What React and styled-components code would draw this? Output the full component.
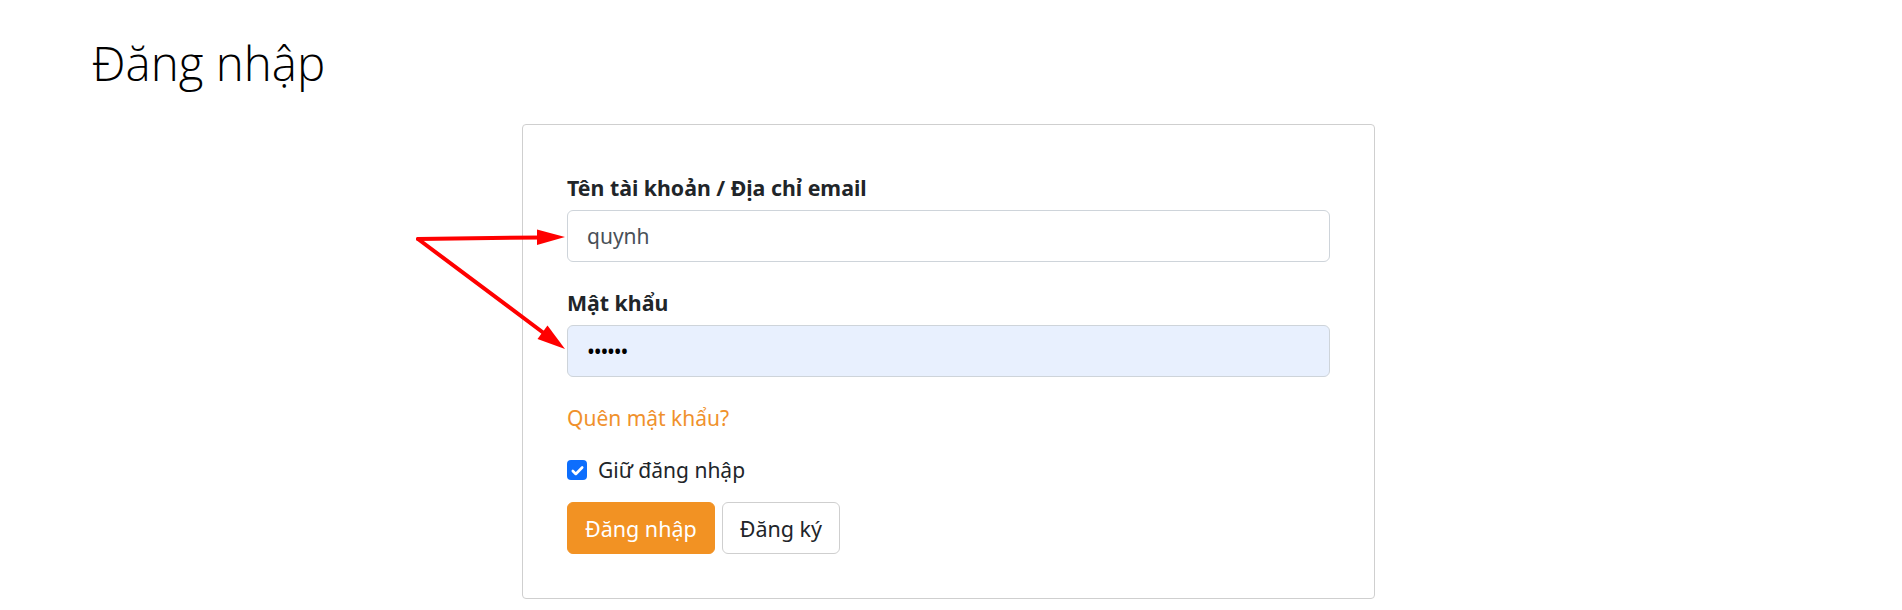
import React from "react";
import styled, { createGlobalStyle } from "styled-components";

const GlobalStyle = createGlobalStyle`
  body {
    margin: 0;
    background: #fff;
    font-family: "Noto Sans", "Open Sans", sans-serif;
    color: #212529;
  }
`;

const App = () => {
  return (
    <Page>
      <GlobalStyle />
      <Title>Đăng nhập</Title>
      <CardRow>
        <Card>
          <Field>
            <Label>Tên tài khoản / Địa chỉ email</Label>
            <Input type="text" defaultValue="quynh" />
          </Field>
          <Field>
            <Label>Mật khẩu</Label>
            <Input type="password" defaultValue="123456" autofilled />
          </Field>
          <ForgotLink href="#">Quên mật khẩu?</ForgotLink>
          <CheckRow>
            <CheckBox>
              <svg width="15" height="15" viewBox="0 0 16 16">
                <path
                  d="M3 8.5l3.2 3.2L13 4.8"
                  fill="none"
                  stroke="#fff"
                  strokeWidth="2.8"
                  strokeLinecap="round"
                  strokeLinejoin="round"
                />
              </svg>
            </CheckBox>
            Giữ đăng nhập
          </CheckRow>
          <Actions>
            <Button primary>Đăng nhập</Button>
            <Button>Đăng ký</Button>
          </Actions>
        </Card>
      </CardRow>
      <Arrows width="1902" height="610" viewBox="0 0 1902 610">
        <line x1="418" y1="239" x2="542" y2="237.4" stroke="#f00" strokeWidth="4" strokeLinecap="round" />
        <polygon points="565,237 537,229.5 537,245" fill="#f00" />
        <line x1="418" y1="239" x2="545" y2="334" stroke="#f00" strokeWidth="4" strokeLinecap="round" />
        <polygon points="565,349 537.5,339 547.5,325.6" fill="#f00" />
      </Arrows>
    </Page>
  );
};

const Page = styled.div`
  position: relative;
  width: 1902px;
  height: 610px;
  overflow: hidden;
`;

const Title = styled.h1`
  margin: 0;
  padding: 34px 0 0 92px;
  font-family: "Open Sans", "Noto Sans", sans-serif;
  font-weight: 300;
  font-size: 47.5px;
  line-height: 1.2;
  color: #000;
`;

const CardRow = styled.div`
  display: flex;
  justify-content: center;
  padding: 33px 5px 0 0;
`;

const Card = styled.div`
  width: 853px;
  box-sizing: border-box;
  border: 1px solid #cfcfcf;
  border-radius: 4px;
  padding: 48px 44px 44px;
  display: flex;
  flex-direction: column;
`;

const Field = styled.div`
  display: flex;
  flex-direction: column;
  gap: 7px;
  margin-bottom: 26px;
`;

const Label = styled.label`
  font-size: 21.3px;
  font-weight: 700;
  line-height: 30px;
  color: #212529;
`;

const Input = styled.input`
  box-sizing: border-box;
  height: 52px;
  width: 100%;
  padding: 0 19px;
  border: 1px solid #ced4da;
  border-radius: 6px;
  font-family: "Noto Sans", "Open Sans", sans-serif;
  font-size: 21px;
  color: ${(p) => (p.autofilled ? "#000" : "#495057")};
  background: ${(p) => (p.autofilled ? "#e8f0fe" : "#fff")};
  letter-spacing: ${(p) => (p.type === "password" ? "-1.2px" : "0")};
  outline: none;
`;

const ForgotLink = styled.a`
  align-self: flex-start;
  font-size: 21px;
  line-height: 30px;
  color: #f0912c;
  text-decoration: none;
  margin-bottom: 22px;
`;

const CheckRow = styled.label`
  display: flex;
  align-items: center;
  gap: 11px;
  font-size: 21px;
  line-height: 30px;
  color: #212529;
  margin-bottom: 17px;
`;

const CheckBox = styled.span`
  width: 20px;
  height: 20px;
  box-sizing: border-box;
  border-radius: 4px;
  background: #0d6efd;
  display: flex;
  align-items: center;
  justify-content: center;
`;

const Actions = styled.div`
  display: flex;
  gap: 7px;
`;

const Button = styled.button`
  height: 52px;
  padding: 0 17px;
  border-radius: 6px;
  font-family: "Noto Sans", "Open Sans", sans-serif;
  font-size: 21.5px;
  border: 1px solid ${(p) => (p.primary ? "#f29223" : "#cfcfcf")};
  background: ${(p) => (p.primary ? "#f29223" : "#fff")};
  color: ${(p) => (p.primary ? "#fff" : "#212529")};
  cursor: pointer;
`;

const Arrows = styled.svg`
  position: absolute;
  left: 0;
  top: 0;
  pointer-events: none;
`;

export default App;
